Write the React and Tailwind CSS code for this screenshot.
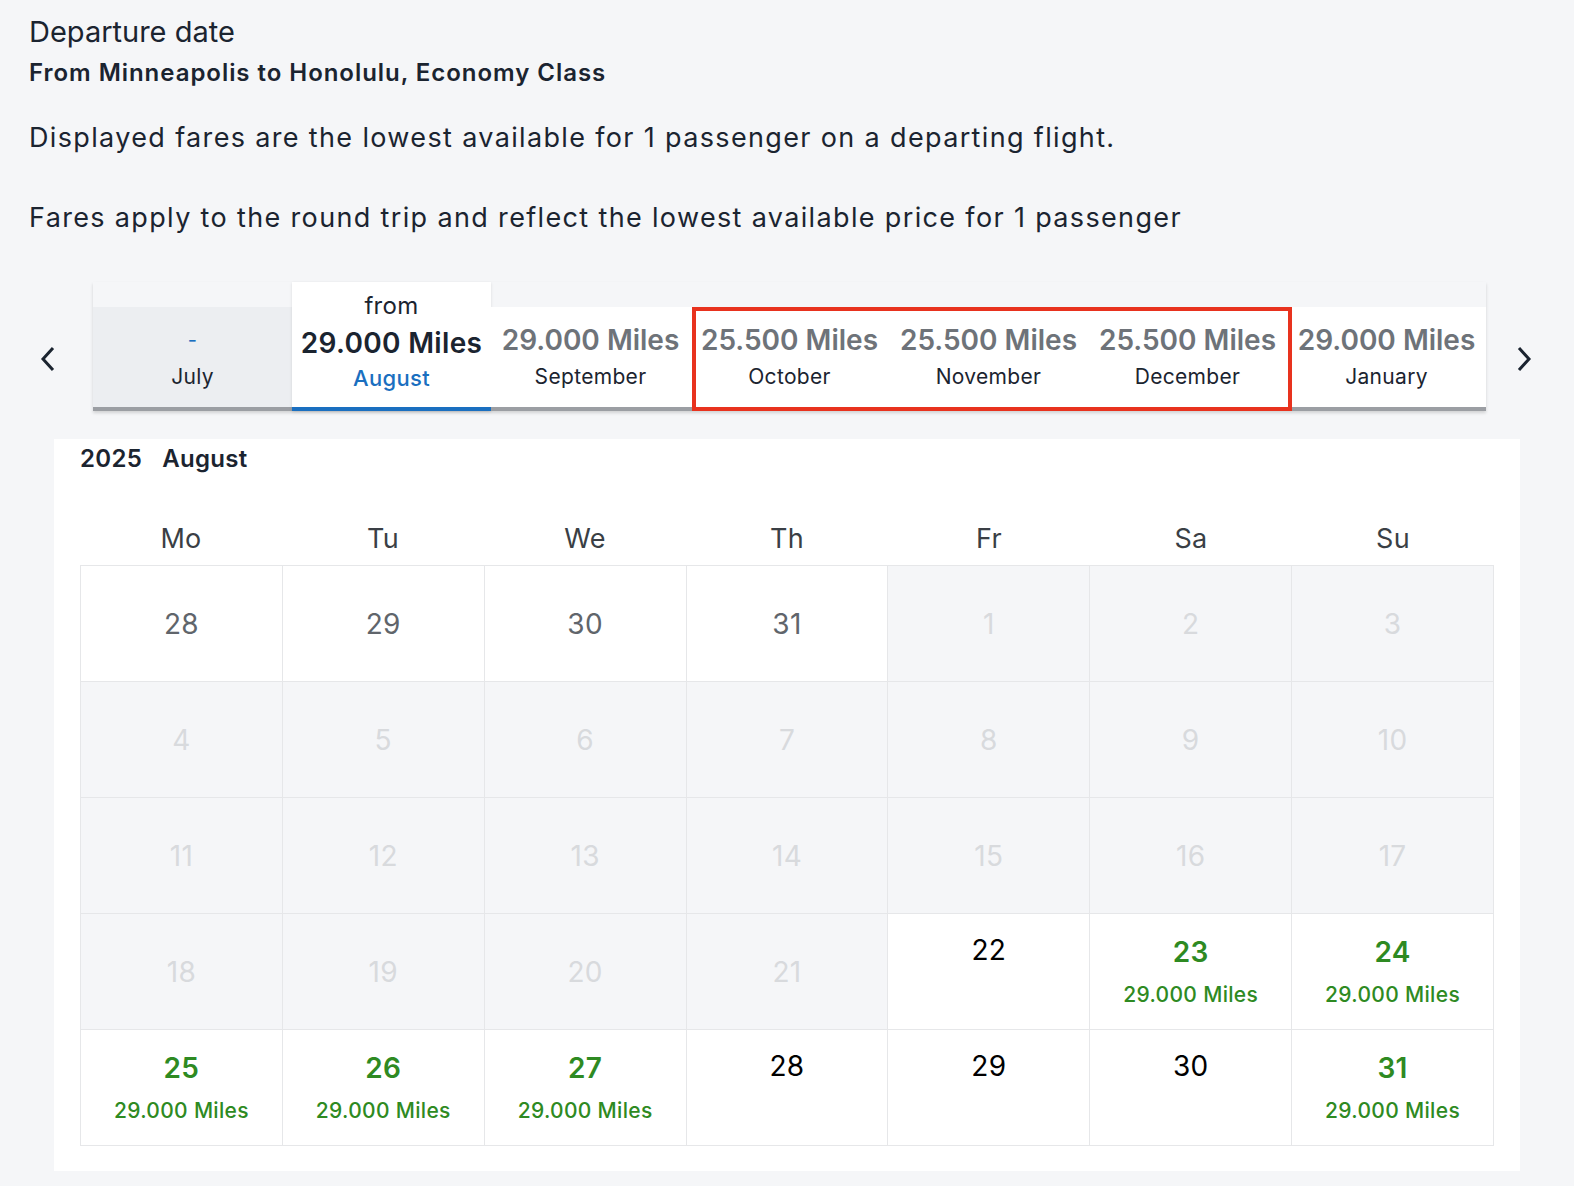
import React from "react";

const tabs = [
  { price: "-", month: "July", kind: "disabled" },
  { price: "29.000 Miles", month: "August", kind: "active" },
  { price: "29.000 Miles", month: "September" },
  { price: "25.500 Miles", month: "October" },
  { price: "25.500 Miles", month: "November" },
  { price: "25.500 Miles", month: "December" },
  { price: "29.000 Miles", month: "January" },
];

const days = ["Mo", "Tu", "We", "Th", "Fr", "Sa", "Su"];
const cells = [
  [28, "out"], [29, "out"], [30, "out"], [31, "out"], [1, "dis"], [2, "dis"], [3, "dis"],
  [4, "dis"], [5, "dis"], [6, "dis"], [7, "dis"], [8, "dis"], [9, "dis"], [10, "dis"],
  [11, "dis"], [12, "dis"], [13, "dis"], [14, "dis"], [15, "dis"], [16, "dis"], [17, "dis"],
  [18, "dis"], [19, "dis"], [20, "dis"], [21, "dis"], [22, "plain"], [23, "fare"], [24, "fare"],
  [25, "fare"], [26, "fare"], [27, "fare"], [28, "plain"], [29, "plain"], [30, "plain"], [31, "fare"],
];

function Tab({ t }) {
  if (t.kind === "active") {
    return (
      <div className="w-[199px] h-[129px] bg-white flex flex-col items-center justify-start pt-[10px] border-b-4 border-[#1a6fc0] shadow-sm">
        <div className="text-[24px] leading-[28px] text-[#1b2430]">from</div>
        <div className="text-[28px] leading-[40px] font-semibold text-[#1b2430] mt-[3px]">{t.price}</div>
        <div className="text-[22px] leading-[30px] font-medium text-[#1a6fc0]">{t.month}</div>
      </div>
    );
  }
  const dis = t.kind === "disabled";
  return (
    <div className={`w-[199px] h-[104px] flex flex-col items-center justify-center border-b-4 border-[#9b9ea3] ${dis ? "bg-[#eceef1]" : "bg-white"}`}>
      <div className={`leading-[36px] ${dis ? "text-[20px] text-[#1a6fc0]" : "text-[28px] font-semibold text-[#6e7379] tracking-[0]"}`}>{t.price}</div>
      <div className="text-[21px] leading-[30px] text-[#1b2430] mt-[4px]">{t.month}</div>
    </div>
  );
}

export default function App() {
  return (
    <div className="min-h-[1186px] bg-[#f5f6f8] pl-[29px] pt-[14px] tracking-[0.02em]" style={{ fontFamily: "Inter, 'Noto Sans', sans-serif" }}>
      <h1 className="text-[29px] leading-[36px] text-[#1b2430] tracking-[0]">Departure date</h1>
      <div className="text-[24px] leading-[34px] font-semibold text-[#1b2430] mt-[6px] tracking-[0.04em]">From Minneapolis to Honolulu, Economy Class</div>
      <p className="text-[27px] leading-[36px] text-[#1b2430] mt-[30px] tracking-[0.05em]">Displayed fares are the lowest available for 1 passenger on a departing flight.</p>
      <p className="text-[27px] leading-[36px] text-[#1b2430] mt-[44px] tracking-[0.05em]">Fares apply to the round trip and reflect the lowest available price for 1 passenger</p>

      <div className="flex items-end mt-[46px] ml-[-27px]">
        <div className="w-[91px] h-[104px] flex items-center justify-center">
          <svg width="20" height="30" viewBox="0 0 20 30" fill="none" stroke="#1b2430" strokeWidth="3"><path d="M15 4 L5 15 L15 26" /></svg>
        </div>
        <div className="flex items-end relative shadow-[0_2px_3px_rgba(0,0,0,0.15)]">
          {tabs.map((t, i) => <Tab key={i} t={t} />)}
          <div className="absolute left-[599px] top-[25px] w-[600px] h-[104px] border-[4px] border-[#e8321e] pointer-events-none" />
        </div>
        <div className="w-[76px] h-[104px] flex items-center justify-center">
          <svg width="20" height="30" viewBox="0 0 20 30" fill="none" stroke="#1b2430" strokeWidth="3"><path d="M5 4 L15 15 L5 26" /></svg>
        </div>
      </div>

      <div className="w-[1466px] ml-[25px] mt-[28px] bg-white px-[26px] pt-[4px] pb-[25px]">
        <div className="text-[24px] leading-[32px] font-semibold text-[#1b2430] flex gap-[20px]"><span>2025</span><span>August</span></div>
        <div className="grid grid-cols-7 mt-[44px]">
          {days.map(d => (
            <div key={d} className="text-center text-[27px] leading-[40px] text-[#3a3f45] pb-[6px]">{d}</div>
          ))}
        </div>
        <div className="grid grid-cols-7 border-l border-t border-[#e6e7e9]">
          {cells.map(([n, k], i) => {
            const bg = k === "dis" ? "bg-[#f5f6f8]" : "bg-white";
            return (
              <div key={i} className={`h-[116px] border-r border-b border-[#e6e7e9] flex flex-col items-center ${bg} ${k === "out" || k === "dis" ? "justify-center" : "pt-[18px]"}`}>
                {k === "out" && <span className="text-[28px] text-[#60656b]">{n}</span>}
                {k === "dis" && <span className="text-[28px] text-[#d8dadd]">{n}</span>}
                {k === "plain" && <span className="text-[28px] leading-[36px] text-black">{n}</span>}
                {k === "fare" && (
                  <>
                    <span className="text-[28px] leading-[40px] font-semibold text-[#2e8a22]">{n}</span>
                    <span className="text-[21px] leading-[30px] font-medium text-[#2e8a22] mt-[8px]">29.000 Miles</span>
                  </>
                )}
              </div>
            );
          })}
        </div>
      </div>
    </div>
  );
}
